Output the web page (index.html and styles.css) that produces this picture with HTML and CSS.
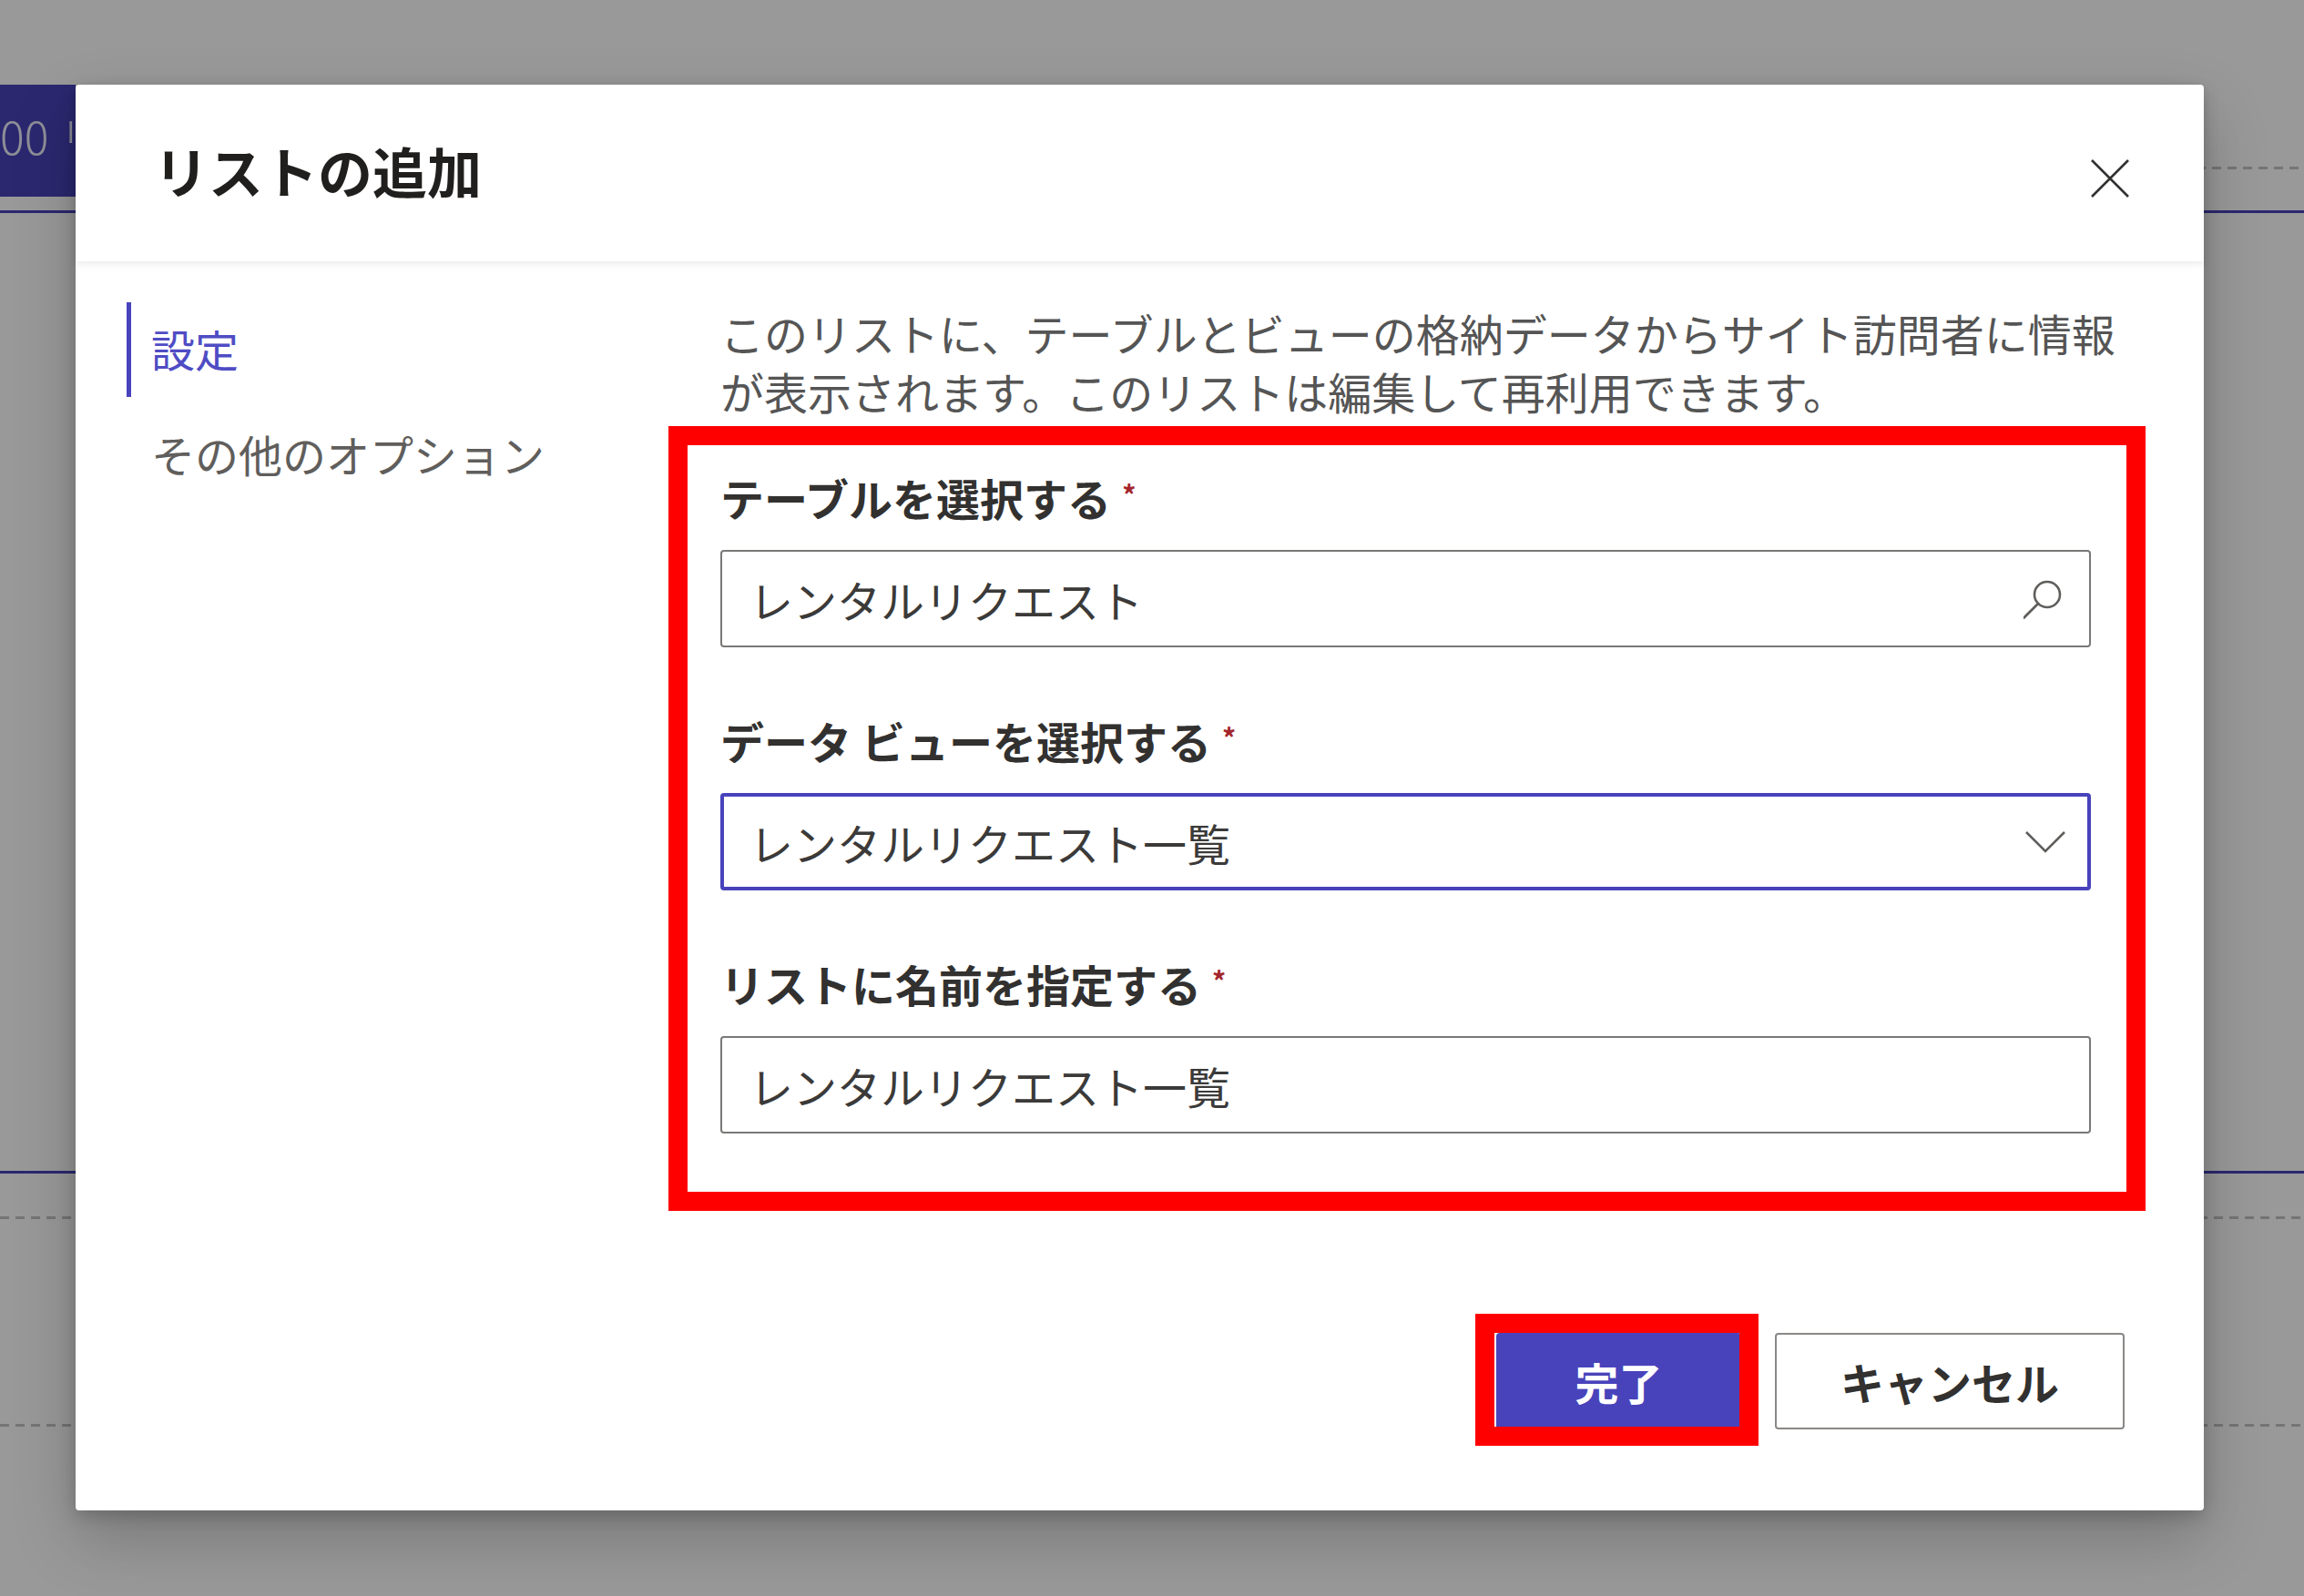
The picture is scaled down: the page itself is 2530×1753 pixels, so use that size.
FILE: index.html
```html
<!DOCTYPE html>
<html lang="ja">
<head>
    <meta charset="UTF-8">
    <meta name="viewport" content="width=device-width, initial-scale=1.0">
    <title>リストの追加</title>
    <link rel="stylesheet" href="styles.css">
</head>
<body>

    <!-- Page behind the dialog -->
    <div class="page">
        <div class="page-top">
            <div class="page-tab">00 リ</div>
            <div class="page-tab-rest"><div class="dash-line"></div></div>
        </div>
        <div class="page-rule"></div>
        <div class="page-rule lower"></div>
        <div class="dash-line first"></div>
        <div class="dash-line second"></div>
    </div>

    <!-- Add list dialog -->
    <div class="overlay">
        <div class="dialog">
            <div class="dialog-header">
                <h1>リストの追加</h1>
                <button class="close-button" aria-label="閉じる">
                    <svg width="42" height="42" viewBox="0 0 42 42">
                        <path d="M1 1 L41 41 M41 1 L1 41" stroke="#323130" stroke-width="2.6" fill="none"/>
                    </svg>
                </button>
            </div>

            <div class="dialog-body">
                <ul class="side-nav">
                    <li class="active">設定</li>
                    <li>その他のオプション</li>
                </ul>

                <div class="content">
                    <p class="description">このリストに、テーブルとビューの格納データからサイト訪問者に情報<br>が表示されます。このリストは編集して再利用できます。</p>

                    <div class="fields marked">
                        <div class="field">
                            <label for="table">テーブルを選択する<span class="required">*</span></label>
                            <div class="input-box">
                                <input type="text" id="table" value="レンタルリクエスト">
                                <svg class="field-icon" width="48" height="48" viewBox="0 0 48 48">
                                    <circle cx="26" cy="19" r="14" stroke="#605e5c" stroke-width="2.6" fill="none"/>
                                    <path d="M16 29 L0.5 44.5" stroke="#605e5c" stroke-width="2.8" stroke-linecap="round"/>
                                </svg>
                            </div>
                        </div>

                        <div class="field">
                            <label for="view">データ ビューを選択する<span class="required">*</span></label>
                            <div class="input-box focused">
                                <input type="text" id="view" value="レンタルリクエスト一覧">
                                <svg class="field-icon" width="48" height="48" viewBox="0 0 48 48">
                                    <path d="M3 13 L24 34 L45 13" stroke="#605e5c" stroke-width="2.6" fill="none"/>
                                </svg>
                            </div>
                        </div>

                        <div class="field">
                            <label for="name">リストに名前を指定する<span class="required">*</span></label>
                            <div class="input-box">
                                <input type="text" id="name" value="レンタルリクエスト一覧">
                            </div>
                        </div>
                    </div>

                    <div class="actions">
                        <button class="primary marked">完了</button>
                        <button class="secondary">キャンセル</button>
                    </div>
                </div>
            </div>
        </div>
    </div>

</body>
</html>
```

FILE: styles.css
```css
* {
    box-sizing: border-box;
}
body {
    margin: 0;
    width: 2530px;
    height: 1753px;
    overflow: hidden;
    position: relative;
    background-color: #fff;
    font-family: "Noto Sans CJK JP", "Noto Sans", sans-serif;
    color: #323130;
}

/* page behind */
.page {
    display: flex;
    flex-direction: column;
}
.page-top {
    display: flex;
    margin-top: 93px;
    height: 123px;
}
.page-tab {
    width: 83px;
    background-color: #4843bb;
    color: #eeeefc;
    font-size: 50px;
    font-weight: 300;
    line-height: 50px;
    padding-top: 30px;
    white-space: nowrap;
}
.page-tab-rest {
    flex: 1;
    padding-top: 90px;
}
.dash-line {
    height: 3px;
    background-image: linear-gradient(to right, #c4c4c4 10px, transparent 10px);
    background-size: 17px 3px;
}
.dash-line.first {
    margin-top: 47px;
}
.dash-line.second {
    margin-top: 225px;
}
.page-rule {
    height: 3px;
    margin-top: 15px;
    background-color: #4843bb;
}
.page-rule.lower {
    margin-top: 1052px;
}

/* dialog */
.overlay {
    position: absolute;
    top: 0;
    left: 0;
    right: 0;
    bottom: 0;
    background-color: rgba(0, 0, 0, 0.4);
}
.dialog {
    margin: 93px 0 0 83px;
    width: 2337px;
    height: 1566px;
    background-color: #fff;
    border-radius: 4px;
    box-shadow: 0 30px 70px rgba(0, 0, 0, 0.22), 0 6px 18px rgba(0, 0, 0, 0.18);
    display: flex;
    flex-direction: column;
}
.dialog-header {
    height: 194px;
    display: flex;
    align-items: center;
    justify-content: space-between;
    padding: 0 82px 0 86px;
    position: relative;
    z-index: 1;
    box-shadow: 0 3px 7px rgba(0, 0, 0, 0.08);
}
.dialog-header h1 {
    margin: 0 0 8px 0;
    font-size: 60px;
    font-weight: 700;
    color: #201f1e;
}
.close-button {
    border: none;
    background: none;
    padding: 0;
    margin-top: 12px;
    width: 42px;
    height: 42px;
    display: flex;
}
.dialog-body {
    flex: 1;
    display: flex;
}

.side-nav {
    width: 708px;
    margin: 0;
    padding: 45px 0 0 56px;
    list-style: none;
}
.side-nav li {
    height: 104px;
    display: flex;
    align-items: center;
    padding-left: 22px;
    padding-bottom: 4px;
    margin-bottom: 12px;
    border-left: 5px solid transparent;
    font-size: 48px;
    color: #605e5c;
}
.side-nav li.active {
    border-left-color: #4843bb;
    color: #4f4cc4;
}

.content {
    flex: 1;
    padding: 46px 87px 0 0;
}
.description {
    margin: 0;
    font-size: 48px;
    line-height: 64px;
    color: #555;
}

.fields {
    margin: 53px 37px 0 0;
    position: relative;
}
.field + .field {
    margin-top: 70px;
}
.field label {
    display: block;
    font-size: 48px;
    line-height: 64px;
    height: 64px;
    font-weight: 600;
    color: #323130;
    margin-bottom: 26px;
}
.required {
    color: #a4262c;
    font-size: 30px;
    line-height: 0;
    margin-left: 12px;
    vertical-align: 12px;
}
.input-box {
    height: 107px;
    display: flex;
    align-items: center;
    padding: 0 24px 0 30px;
    border: 2px solid #7a7876;
    border-radius: 4px;
}
.input-box.focused {
    border: 4px solid #4843bb;
    padding: 0 22px 0 28px;
}
.input-box input {
    flex: 1;
    border: none;
    outline: none;
    padding: 0;
    background: none;
    font-family: inherit;
    font-size: 48px;
    color: #3b3a39;
}
.field-icon {
    flex: none;
}

.actions {
    display: flex;
    justify-content: flex-end;
    gap: 37px;
    margin-top: 219px;
}
.actions button {
    height: 106px;
    border-radius: 4px;
    font-family: inherit;
    font-size: 48px;
    font-weight: 700;
}
.primary {
    width: 269px;
    border: none;
    background-color: #4843bb;
    color: #fff;
    position: relative;
}
.secondary {
    width: 384px;
    border: 2px solid #8a8886;
    background-color: #fff;
    color: #323130;
}

/* red callouts drawn over the screenshot */
.fields.marked::after {
    content: "";
    position: absolute;
    top: -46px;
    left: -57px;
    right: -60px;
    bottom: -85px;
    border: 21px solid #ff0000;
    pointer-events: none;
}
.primary.marked::after {
    content: "";
    position: absolute;
    top: -21px;
    left: -23px;
    right: -19px;
    bottom: -18px;
    border: 21px solid #ff0000;
    pointer-events: none;
}
```
